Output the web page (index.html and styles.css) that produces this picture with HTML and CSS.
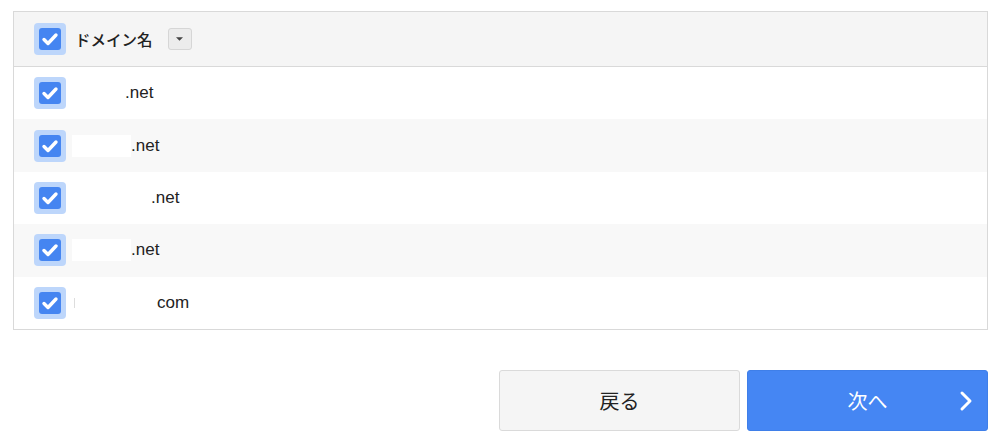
FILE: index.html
```html
<!DOCTYPE html>
<html lang="ja">
<head>
    <meta charset="UTF-8">
    <title>ドメイン選択</title>
    <link rel="stylesheet" href="styles.css">
</head>
<body>
    <div class="domain-table">
        <div class="row header">
            <span class="check"><svg viewBox="0 0 22 22"><path d="M5 11.5l4 4 8-8.5" /></svg></span>
            <span class="label">ドメイン名</span>
            <span class="sort-btn"><svg viewBox="0 0 8 5"><path d="M0 0h8l-4 4z" /></svg></span>
        </div>
        <div class="row">
            <span class="check"><svg viewBox="0 0 22 22"><path d="M5 11.5l4 4 8-8.5" /></svg></span>
            <span class="name"><span class="mask" style="width:53px"></span>.net</span>
        </div>
        <div class="row alt">
            <span class="check"><svg viewBox="0 0 22 22"><path d="M5 11.5l4 4 8-8.5" /></svg></span>
            <span class="name"><span class="mask white" style="width:59px"></span>.net</span>
        </div>
        <div class="row">
            <span class="check"><svg viewBox="0 0 22 22"><path d="M5 11.5l4 4 8-8.5" /></svg></span>
            <span class="name"><span class="mask" style="width:79px"></span>.net</span>
        </div>
        <div class="row alt">
            <span class="check"><svg viewBox="0 0 22 22"><path d="M5 11.5l4 4 8-8.5" /></svg></span>
            <span class="name"><span class="mask white" style="width:59px"></span>.net</span>
        </div>
        <div class="row">
            <span class="check"><svg viewBox="0 0 22 22"><path d="M5 11.5l4 4 8-8.5" /></svg></span>
            <span class="name"><span class="mask tick" style="width:82px"></span>com</span>
        </div>
    </div>

    <div class="actions">
        <button class="btn back">戻る</button>
        <button class="btn next">次へ
            <svg class="chevron" viewBox="0 0 14 24"><path d="M3 4l8 8-8 8" /></svg>
        </button>
    </div>
</body>
</html>
```

FILE: styles.css
```css
body {
    margin: 0;
    padding: 11px 12px 0 13px;
    background-color: #fff;
    font-family: "Liberation Sans", Arial, "Noto Sans CJK JP", sans-serif;
    color: #222;
}

.domain-table {
    border: 1px solid #d9d9d9;
    width: 973px;
}

.row {
    display: flex;
    align-items: center;
    height: 52.4px;
    padding-left: 20px;
    background-color: #fff;
}

.row.alt {
    background-color: #f8f8f8;
}

.row.header {
    height: 54px;
    background-color: #f5f5f5;
    border-bottom: 1px solid #d9d9d9;
}

.check {
    width: 32px;
    height: 32px;
    border-radius: 4px;
    background-color: #bdd6fb;
    display: flex;
    align-items: center;
    justify-content: center;
    flex-shrink: 0;
}

.check svg {
    width: 22px;
    height: 22px;
    background-color: #4585f1;
    border-radius: 3px;
}

.check path {
    fill: none;
    stroke: #fff;
    stroke-width: 3.4;
    stroke-linecap: round;
    stroke-linejoin: round;
}

.label {
    margin-left: 9px;
    font-size: 15.5px;
    font-family: "Noto Sans CJK JP", sans-serif;
    font-weight: 500;
}

.sort-btn {
    margin-left: 15px;
    width: 22px;
    height: 20px;
    border: 1px solid #d6d6d6;
    border-radius: 3px;
    background-color: #ececec;
    display: flex;
    align-items: center;
    justify-content: center;
}

.sort-btn svg {
    width: 7px;
    height: 5px;
    fill: #444;
}

.name {
    margin-left: 6px;
    display: flex;
    align-items: center;
    font-size: 17px;
}

.mask {
    display: inline-block;
    height: 22px;
}

.mask.white {
    background-color: #fff;
}

.mask.tick {
    border-left: 1px solid #ddd;
    height: 10px;
    margin-left: 2px;
}

.actions {
    display: flex;
    justify-content: flex-end;
    gap: 7px;
    margin-top: 40px;
    width: 975px;
}

.btn {
    position: relative;
    width: 241px;
    height: 61px;
    border-radius: 3px;
    font-size: 20px;
    font-family: "Noto Sans CJK JP", sans-serif;
    cursor: pointer;
}

.btn.back {
    background-color: #f5f5f5;
    border: 1px solid #dadada;
    color: #222;
}

.btn.next {
    background-color: #4586f3;
    border: 1px solid #3f7fe9;
    color: #fff;
}

.chevron {
    position: absolute;
    right: 14px;
    top: 18px;
    width: 14px;
    height: 24px;
    fill: none;
    stroke: #fff;
    stroke-width: 3;
    stroke-linecap: round;
    stroke-linejoin: round;
}
```
